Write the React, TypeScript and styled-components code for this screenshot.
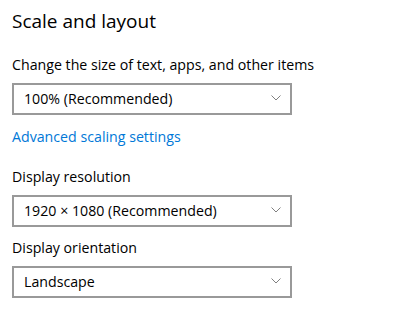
import styled, { createGlobalStyle } from 'styled-components';
import { FC } from 'react';

const GlobalStyle = createGlobalStyle`
	html, body {
		margin: 0;
		padding: 0;
		background: #ffffff;
	}
	body {
		font-family: 'Open Sans', 'Noto Sans', sans-serif;
		color: #000000;
	}
`;

interface DropdownProps {
	value: string;
}

const Dropdown: FC<DropdownProps> = ({ value }) => {
	return (
		<SelectBox>
			<SelectValue>{value}</SelectValue>
			<Chevron width="10" height="6" viewBox="0 0 10 6">
				<path d="M0.5 0.5 L5 5 L9.5 0.5" fill="none" stroke="#808080" strokeWidth="1" />
			</Chevron>
		</SelectBox>
	);
};

export default function App() {
	return (
		<>
			<GlobalStyle />
			<Page>
				<Title>Scale and layout</Title>
				<Group $spacing={20}>
					<Label>Change the size of text, apps, and other items</Label>
					<Dropdown value="100% (Recommended)" />
				</Group>
				<Link href="#">Advanced scaling settings</Link>
				<Group $spacing={20}>
					<Label>Display resolution</Label>
					<Dropdown value="1920 × 1080 (Recommended)" />
				</Group>
				<Group $spacing={11}>
					<Label>Display orientation</Label>
					<Dropdown value="Landscape" />
				</Group>
			</Page>
		</>
	);
}

const Page = styled.div`
	display: flex;
	flex-direction: column;
	align-items: flex-start;
	padding: 7px 12px 0;
	width: 400px;
	height: 325px;
	box-sizing: border-box;
`;

const Title = styled.h1`
	margin: 0;
	font-size: 19px;
	line-height: 28px;
	font-weight: 400;
`;

const Group = styled.div<{ $spacing: number }>`
	display: flex;
	flex-direction: column;
	gap: 8px;
	margin-top: ${(props) => props.$spacing}px;
`;

const Label = styled.div`
	font-size: 14.2px;
	line-height: 20px;
`;

const SelectBox = styled.div`
	display: flex;
	align-items: center;
	justify-content: space-between;
	width: 280px;
	height: 32px;
	box-sizing: border-box;
	border: 2px solid #999999;
	padding: 0 9px 0 10px;
`;

const SelectValue = styled.span`
	font-size: 14.2px;
	line-height: 20px;
`;

const Chevron = styled.svg`
	display: block;
	margin-top: -2px;
`;

const Link = styled.a`
	margin-top: 12px;
	font-size: 14.2px;
	line-height: 20px;
	color: #0078d7;
	text-decoration: none;
`;
